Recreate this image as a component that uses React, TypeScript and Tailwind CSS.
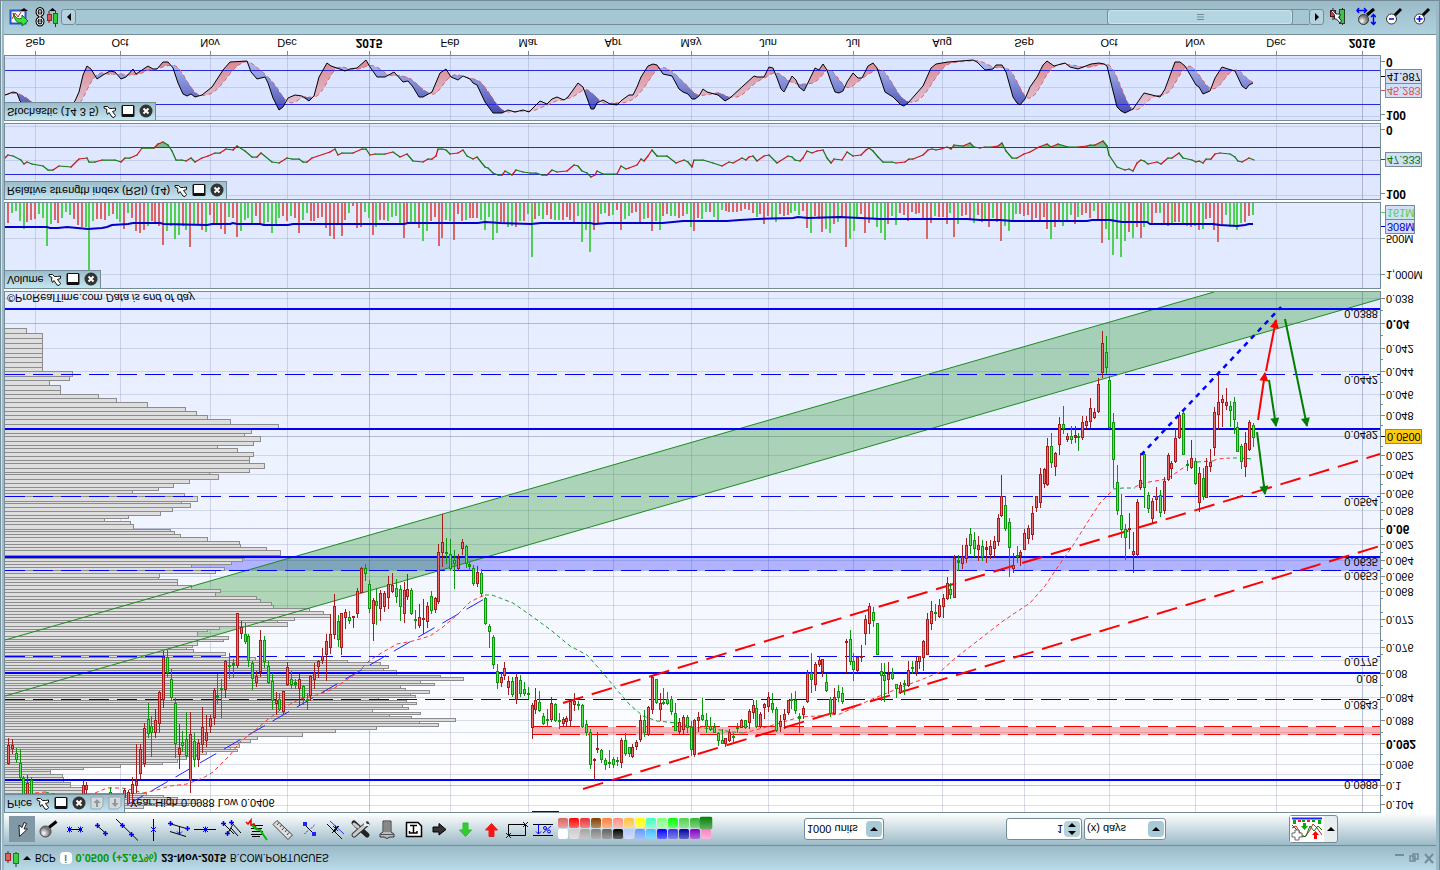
import { useState } from "react";
import type { ReactNode } from "react";

type Point = [number, number];

const FONT = '"Liberation Sans", Arial, sans-serif';

const toPoints = (s: string): Point[] =>
  s
    .trim()
    .split(/\s+/)
    .map((p) => p.split(",").map(Number) as Point);

const months: [number, string, boolean?][] = [
  [35, "Sep"],
  [120, "Oct"],
  [210, "Nov"],
  [287, "Dec"],
  [369, "2015", true],
  [450, "Feb"],
  [528, "Mar"],
  [613, "Apr"],
  [691, "May"],
  [768, "Jun"],
  [853, "Jul"],
  [942, "Aug"],
  [1024, "Sep"],
  [1109, "Oct"],
  [1195, "Nov"],
  [1276, "Dec"],
  [1362, "2016", true],
];

// x, high, body start, body end, low, direction
const candles = `
8,738,745,763,764,r 12,739,745,748,753,r 16,748,753,759,762,g 20,749,763,777,778,g 23,776,778,800,802,g 27,775,783,797,800,r 31,777,780,797,800,g
83,781,785,797,800,r 86,782,785,789,797,r 110,787,792,797,800,g 124,788,790,797,800,r 128,790,792,803,803,r 132,777,784,793,803,r 136,744,781,785,792,r
140,744,749,773,778,r 144,723,728,763,766,r 148,703,719,733,737,g 151,716,726,732,756,g 155,709,720,732,737,r 159,691,692,723,732,r 163,651,657,699,707,r
167,650,657,672,676,g 171,669,679,697,700,g 175,698,703,743,757,g 179,724,748,754,768,r 182,731,742,745,751,g 186,712,739,755,757,g 190,712,734,780,792,r
194,733,741,759,766,g 198,739,743,759,766,r 202,707,727,744,752,r 206,715,732,740,746,r 210,715,718,726,732,r 214,688,690,717,724,r 217,674,695,697,703,g
221,679,688,689,717,g 225,660,661,689,697,r 229,653,665,666,678,g 233,659,663,665,677,g 237,613,613,665,667,r 241,621,627,633,638,r 245,623,634,641,643,g
248,634,636,660,666,g 252,661,663,678,689,g 256,671,676,682,686,r 260,630,640,671,676,r 264,636,640,661,667,g 268,661,666,682,683,g 272,673,681,700,709,g
276,692,700,703,714,r 279,693,699,709,710,g 283,691,691,711,713,r 287,662,667,684,685,r 291,671,679,684,688,g 295,679,682,684,688,g 299,674,679,688,704,r
303,685,686,697,704,g 307,693,699,700,709,g 310,675,676,695,700,r 314,663,673,679,688,r 318,660,661,666,677,r 322,648,656,660,663,r 326,634,641,654,680,r
330,614,634,647,653,r 334,594,606,634,638,r 338,615,621,639,646,g 341,613,613,647,654,r 345,609,612,617,628,r 349,611,617,620,623,g 353,616,616,617,627,r
357,588,591,613,617,r 361,567,568,592,592,r 365,564,568,573,580,g 369,580,584,608,612,g 373,598,600,623,640,r 376,588,601,605,624,g 380,590,593,608,620,r
384,591,593,606,611,r 388,576,584,597,608,r 392,573,585,591,592,r 396,579,588,596,602,g 400,585,589,606,620,g 404,582,590,613,622,r 407,574,589,596,599,r
411,588,590,613,614,g 415,610,619,620,628,g 419,604,617,625,627,r 423,599,618,619,633,r 427,602,606,621,627,r 431,591,596,610,613,g 435,597,598,609,612,r
438,544,552,601,603,r 442,514,542,552,566,r 446,538,552,553,563,g 450,539,554,568,570,g 454,550,560,563,588,g 458,554,558,568,569,r 462,539,542,548,554,r
466,545,546,563,567,g 469,562,564,566,570,g 473,565,568,583,585,g 477,566,572,583,586,r 481,569,573,593,596,g 485,597,598,623,624,g 489,624,626,631,647,g
493,635,637,664,668,g 497,664,671,682,688,g 501,673,677,682,686,r 504,662,668,675,679,r 508,676,681,687,694,r 512,677,681,694,696,g 516,673,677,699,703,r
520,675,680,693,696,g 524,682,689,693,695,g 528,687,693,694,698,g 532,703,705,727,738,r 535,688,700,709,713,r 539,691,702,710,711,g 543,713,716,723,724,g
547,709,719,720,726,g 551,697,703,719,721,r 555,703,704,720,721,g 559,713,720,721,728,g 563,717,719,723,726,r 566,716,718,721,726,r 570,700,701,720,726,r
574,693,701,704,710,r 578,701,704,705,709,g 582,704,705,726,727,g 586,720,724,732,735,g 590,729,732,764,768,g 594,758,759,760,779,r 597,732,748,749,752,r
601,749,750,759,762,g 605,758,760,764,769,g 609,750,762,763,767,g 613,757,759,764,767,g 617,757,760,761,765,g 621,738,740,762,767,r 625,733,740,753,755,g
629,747,747,753,756,g 632,744,747,756,757,r 636,740,742,746,749,r 640,715,720,739,741,r 644,710,720,732,736,g 648,706,707,734,735,r 652,675,677,709,713,r
656,679,679,702,703,g 660,693,703,709,720,r 663,688,702,703,704,g 667,692,699,703,704,g 671,696,699,711,714,g 675,703,713,730,730,g 679,718,722,731,734,r
683,715,717,729,734,r 687,715,717,727,732,g 691,721,727,749,755,g 694,719,720,754,756,r 698,712,717,720,731,r 702,698,715,719,720,g 706,713,720,726,732,g
710,717,726,729,730,g 714,723,727,732,732,g 718,732,733,740,745,g 722,729,740,743,743,g 725,738,738,743,746,r 729,729,732,740,741,r 733,733,736,737,742,g
737,723,727,728,732,g 741,719,720,727,727,r 745,720,720,727,728,g 749,709,711,722,728,r 753,700,705,712,718,r 756,700,708,726,727,g 760,712,714,726,727,r
764,703,704,707,718,r 768,692,697,706,711,r 772,693,703,709,712,g 776,707,709,730,731,g 780,715,721,726,731,r 784,709,714,719,728,r 788,700,700,712,714,r
791,693,699,700,708,g 795,691,700,710,713,g 799,713,716,718,732,g 803,706,708,714,718,r 807,670,673,701,702,r 811,653,673,679,692,g 815,662,664,684,690,r
819,656,660,664,666,r 822,659,659,671,676,r 826,674,682,690,691,g 830,697,699,713,716,g 834,688,697,713,714,r 838,685,691,697,701,g 842,687,693,701,703,g
846,639,641,642,672,r 850,630,639,661,664,g 853,653,661,669,680,g 857,656,657,670,672,r 861,645,656,657,661,r 865,615,619,633,644,r 869,603,606,623,633,r
873,607,612,620,626,g 877,623,623,654,654,g 881,663,671,675,700,g 884,663,675,680,701,g 888,662,674,679,693,r 892,668,673,678,679,g 896,684,684,688,697,g
900,682,685,692,693,r 904,680,683,684,694,g 908,661,670,685,686,r 912,661,667,668,673,g 916,657,661,672,675,r 919,656,656,661,668,r 923,640,641,657,670,r
927,613,619,654,654,r 931,601,611,623,629,r 935,604,612,613,620,g 939,599,605,616,617,r 943,594,598,606,617,r 947,577,583,598,599,r 950,583,589,594,598,g
954,555,558,597,597,r 958,555,560,562,570,g 962,545,557,563,568,r 966,538,545,558,562,r 970,528,534,545,553,g 974,532,540,548,556,g 978,536,545,549,560,r
982,540,546,556,560,g 986,541,547,549,562,r 990,540,546,554,558,r 994,536,541,548,556,r 998,514,518,541,545,r
1001,475,496,515,516,r 1005,496,505,528,530,g 1009,518,522,547,576,g 1013,553,565,568,572,r 1017,546,555,556,562,g 1020,550,552,555,565,r
1024,529,533,549,549,r 1028,525,528,538,543,r 1032,506,513,534,539,r 1036,496,496,507,511,r 1040,468,474,502,507,r 1044,468,469,483,487,r 1047,438,446,484,485,r
1051,433,446,462,467,g 1055,452,453,466,475,r 1059,417,424,444,454,r 1063,406,424,428,433,g 1067,433,436,439,441,r 1071,426,436,439,443,g 1075,426,435,437,442,r
1078,433,436,437,450,g 1082,416,422,437,439,r 1086,416,421,425,428,r 1090,398,408,421,427,r 1094,408,412,417,418,r 1098,378,384,411,412,r 1102,331,343,372,377,r
1106,336,352,367,373,g 1109,376,380,427,428,g 1113,413,422,459,487,g 1117,465,482,510,514,g 1121,494,515,529,537,g 1125,524,529,537,559,g 1129,513,528,529,548,r
1133,532,551,554,572,r 1137,499,502,554,556,r 1140,453,480,487,489,r 1144,452,454,487,507,g 1148,492,495,508,512,g 1152,498,501,518,522,r 1156,487,496,499,510,r
1160,490,495,512,516,g 1164,477,481,510,513,r 1168,453,455,479,480,r 1171,461,463,468,478,r 1175,429,438,461,462,r 1179,412,415,437,438,r 1183,409,413,454,454,g
1187,460,464,465,470,g 1191,440,458,467,468,r 1195,458,461,483,484,g 1199,467,473,502,511,r 1203,468,478,496,499,g 1206,458,466,497,497,r 1210,449,462,466,471,r
1214,407,412,447,455,r 1218,374,402,414,429,r 1222,395,399,402,426,r 1226,388,402,405,409,r 1230,401,406,410,426,g 1234,397,402,419,433,g 1237,422,427,451,451,g
1241,444,446,461,468,g 1245,432,443,466,476,r 1249,420,422,449,450,r 1253,423,425,437,446,g`
  .trim()
  .split(/\s+/)
  .map((row) => {
    const [x, high, open, close, low, dir] = row.split(",");
    return { x: +x, high: +high, open: +open, close: +close, low: +low, up: dir === "r" };
  });

const volumes = `
20r 10g 8g 18g 26g 19r 17r 16r 11g 15g 43g 21g 17r 20r 15g 9g 12g 16r 22r 24r 24g 67g 18g 16r 16r 17r 13g 11r 16g 19g 26r 10g 15r 28r 30r 27r 23g 18r 21r 23r
42r 28g 23g 36g 32g 23r 27g 44r 22g 21r 27r 29g 12r 21r 21g 26r 31r 14g 15r 34r 28g 17g 15g 22g 13r 21r 23g 19g 30g 22g 15g 13r 18r 13g 15r 30r 17g 10g 18r 18r
15r 14r 25r 33r 36r 21r 33r 17r 10g 3r 25r 24r 9g 15g 32r 24g 17r 17r 18g 14g 13g 21g 35r 20r 21g 21g 25r 38g 28g 18r 14r 43r 35r 17g 18g 37r 11r 18r 17g 15r 15r 15r
17g 27g 14g 37g 30g 20r 21r 24g 23g 24r 18g 18r 11g 54g 16r 13g 16g 12r 16r 17g 17g 17r 14r 17r 19r 13g 39g 27g 49g 27r 21r 11g 10g 13r 12g 7r 27r 16g 13g 10r
9r 20r 16g 15r 28r 18g 27g 13r 11r 13g 13g 15r 13r 11g 24g 28r 15r 16g 9g 9r 14g 18g 7g 8r 9r 9r 9r 8r 6r 7r 10r 14g 11r 21r 13r 15g 19g 11r 13r 12r
10g 8g 12g 8r 25r 30g 13r 16r 29r 26g 30g 21r 19g 15r 44r 36g 28g 16g 11r 30r 20r 15g 24g 30g 37g 21r 13g 22g 10r 12r 18r 9r 11r 10r 16r 36r 20r 13g 14r 14r
21r 10g 34r 21g 13r 12r 16r 20g 12r 19r 16g 24r 15g 19r 38r 23g 28g 19g 11g 11r 13r 12r 18r 15r 18r 14r 26r 36g 24r 18r 23g 18g 12g 21r 14g 12r 10r 15r 8g 18r
40r 26g 37g 52g 36g 54g 38g 29r 35g 24r 35r 24g 19g 20r 10r 10g 20r 23r 22g 19r 19r 22g 23g 24r 23g 27r 26g 16r 15r 27r 39r 23r 12g 24g 23g 27g 20g 19r 13r 12g`
  .trim()
  .split(/\s+/)
  .map((v) => ({ size: parseInt(v, 10), up: v.endsWith("r") }));

const volumeAverage = `5,227 47,227 50,228 58,228 67,227 88,229 102,228 107,227 112,225 128,224 133,223 160,223 164,224 207,225 212,224 230,224 233,223 237,224
260,224 264,225 288,225 293,224 404,224 408,223 478,223 485,222 500,223 531,224 541,223 590,223 595,224 607,223 663,223 683,221 727,221 740,220 757,219 793,218
798,217 808,218 840,217 880,219 967,219 980,220 1000,220 1012,221 1087,221 1092,220 1110,220 1122,222 1147,222 1150,224 1213,224 1220,225 1237,226 1245,225 1249,224 1253,224`;

const rsi = toPoints(`5,158 8,155 13,156 21,160 24,164 27,162 32,164 43,166 48,170 53,170 59,166 71,167 79,159 87,158 89,162 95,162 102,160 115,160 121,162 125,158
130,158 137,155 142,148 154,148 158,144 163,142 168,145 172,151 176,160 182,160 186,161 191,158 195,162 202,158 208,156 215,153 220,153 226,149 233,150 237,146 245,151
252,157 257,157 261,153 272,162 279,163 287,158 292,159 299,159 303,162 307,162 312,158 330,152 335,149 338,155 342,153 353,153 362,149 366,149 370,155 375,154 385,154
393,152 400,157 407,154 413,161 423,162 428,159 432,159 436,156 438,149 442,149 446,150 450,154 458,153 463,150 467,156 473,159 477,157 485,167 488,168 493,173 498,175
502,175 505,171 512,175 516,170 523,172 530,173 536,173 542,175 547,175 552,170 557,172 567,171 574,165 578,166 582,171 587,173 591,177 595,175 597,171 603,174 617,174
621,166 626,169 629,168 637,165 641,159 644,161 648,156 652,150 657,156 667,156 676,163 684,160 688,162 692,167 694,160 703,160 713,163 722,166 729,162 733,163 742,158
746,160 749,157 753,156 757,161 764,156 769,155 777,163 788,156 792,157 795,160 800,161 803,158 807,151 812,153 817,151 823,150 827,158 831,163 834,159 842,160 847,152
853,156 861,155 866,150 869,148 873,151 878,157 883,162 892,162 896,163 905,162 909,159 913,159 923,155 928,150 932,149 936,150 941,149 947,147 951,149 954,145 963,146
970,143 974,147 980,148 985,147 992,147 998,146 1002,143 1006,151 1012,158 1017,158 1024,154 1030,152 1039,147 1047,144 1051,147 1058,144 1068,147 1078,147 1087,146
1090,145 1095,145 1103,141 1107,146 1109,155 1117,167 1125,170 1129,169 1133,171 1137,163 1141,160 1144,161 1148,164 1157,162 1161,164 1168,158 1172,158 1179,153
1183,158 1192,160 1196,162 1199,161 1203,163 1206,159 1211,159 1215,154 1220,153 1230,154 1235,157 1238,161 1242,162 1249,158 1254,160`);

const stochastic = toPoints(`5,95 13,92 17,93 20,101 27,108 40,112 60,113 72,104 75,101 79,92 83,75 87,66 91,69 97,79 103,75 110,71 115,72 121,79 126,77 133,69 136,74
148,66 153,69 157,69 163,62 168,62 173,68 178,83 183,94 187,96 191,94 195,97 202,95 212,87 223,70 230,62 247,61 251,72 257,79 265,77 268,83 273,98 279,110 283,107
288,98 295,95 302,96 309,101 314,96 319,77 327,63 331,66 337,68 345,71 350,69 357,68 366,60 370,67 377,77 385,77 394,72 403,82 408,81 413,87 419,97 423,97 432,92
440,73 446,69 451,77 458,80 463,76 470,79 473,83 477,85 485,102 493,113 502,113 508,110 515,112 523,110 529,112 534,107 540,101 547,104 552,99 557,97 564,100 568,97
578,83 583,87 591,109 594,109 597,103 603,100 610,104 617,105 622,100 629,95 633,95 637,87 641,77 648,66 653,64 657,65 663,74 672,76 679,89 683,92 688,94 692,99
695,99 699,96 703,89 707,92 718,95 725,101 730,98 743,86 754,76 757,77 764,77 769,67 773,68 777,78 781,89 784,92 792,76 796,80 799,87 804,91 815,68 819,70 823,64
827,70 831,82 835,92 839,93 843,91 847,82 853,73 858,78 862,78 868,66 873,63 877,68 885,92 893,97 901,105 904,106 908,103 923,86 931,68 936,64 948,62 973,60 977,62
985,70 993,69 996,65 1002,65 1006,72 1013,97 1017,103 1020,105 1025,99 1030,87 1037,77 1043,65 1047,61 1054,66 1065,63 1070,67 1078,69 1091,64 1099,63 1104,64
1107,66 1112,87 1117,107 1121,111 1125,113 1133,109 1144,93 1160,97 1165,89 1172,70 1175,62 1180,62 1185,66 1196,85 1199,87 1203,94 1210,91 1215,78 1222,67 1228,69
1235,71 1242,86 1246,89 1249,85 1253,83`);

const valueAt = (points: Point[], x: number) => {
  const i = points.findIndex((p) => p[0] >= x);
  if (i <= 0) return points[i === 0 ? 0 : points.length - 1][1];
  const [x0, y0] = points[i - 1];
  const [x1, y1] = points[i];
  return y0 + ((y1 - y0) * (x - x0)) / (x1 - x0);
};

const stochK: Point[] = Array.from({ length: 625 }, (_, i) => [5 + i * 2, valueAt(stochastic, 5 + i * 2)]);
const stochD: Point[] = stochK.map(([x], i) => {
  const part = stochK.slice(Math.max(0, i - 9), i + 1);
  return [x, part.reduce((sum, p) => sum + p[1], 0) / part.length];
});

// y, right edge
const profile = toPoints(`328,26 333,42 338,42 343,42 348,42 353,42 357,42 362,42 367,42 371,72 376,69 380,49 385,60 390,60 394,98 398,116 402,147 407,185 411,196
415,207 419,230 424,278 429,251 433,244 436,260 441,253 445,217 448,237 452,253 456,249 460,249 463,264 468,249 472,209 474,218 479,189 483,173 487,158 490,132
493,184 496,197 501,181 503,190 507,172 511,160 515,128 518,104 521,130 524,133 529,170 531,174 534,180 537,207 541,239 544,240 547,266 550,280 555,244 558,242
561,231 564,191 567,224 570,215 573,159 577,158 579,177 582,177 585,191 589,220 592,215 596,256 599,260 602,271 605,273 608,309 611,323 614,330 617,294 620,277
622,287 626,219 629,207 631,197 636,228 639,223 641,197 645,192 647,186 649,193 652,225 655,220 657,255 660,347 662,380 665,388 668,383 670,396 675,440 677,463
680,420 683,434 685,400 688,405 690,429 693,410 695,415 697,378 700,406 702,416 704,402 707,408 709,372 712,420 714,389 716,411 718,455 721,419 723,438 726,376
729,335 732,302 736,257 739,250 742,238 744,239 747,230 749,237 751,206 754,196 756,186 759,177 762,162 764,120 767,83 769,50 771,50 774,62 777,63 779,63 782,70
784,70 787,83 790,83 793,146 795,163 797,177 799,197 803,188 805,143 808,120`);

const priceGrid = [
  298, 348, 371, 394, 415, 455, 474, 493, 510, 544, 560, 576, 591, 605, 619, 633, 647, 660, 673, 685, 697, 709, 720, 732,
  743, 754, 764, 774, 795, 805,
];
const priceGridMajor = [323, 436, 528, 785];

const priceScale: [number, string, boolean?][] = [
  [298, "0.038"],
  [323, "0.04", true],
  [348, "0.042"],
  [371, "0.044"],
  [394, "0.046"],
  [415, "0.048"],
  [455, "0.052"],
  [474, "0.054"],
  [493, "0.056"],
  [510, "0.058"],
  [528, "0.06", true],
  [544, "0.062"],
  [560, "0.064"],
  [576, "0.066"],
  [591, "0.068"],
  [619, "0.072"],
  [647, "0.076"],
  [673, "0.08"],
  [697, "0.084"],
  [720, "0.088"],
  [743, "0.092", true],
  [764, "0.096"],
  [785, "0.1"],
  [804, "0.104"],
];

const levels: [number, string][] = [
  [314, "0.0388"],
  [380, "0.0442"],
  [435, "0.0492"],
  [502, "0.0564"],
  [562, "0.0635"],
  [576, "0.0653"],
  [662, "0.0775"],
  [679, "0.08"],
  [705, "0.0843"],
  [785, "0.0989"],
];

const averages: [string, string][] = [
  ["#f33", "35,793 45,792"],
  ["#1a9a3a", "45,792 55,794"],
  ["#f33", "95,793 107,788 122,788"],
  ["#1a9a3a", "122,788 133,790 143,793"],
  [
    "#f33",
    "143,793 157,790 170,786 187,784 203,778 213,772 230,755 240,742 253,732 267,720 283,708 300,699 317,695 333,689 357,673 370,660 383,652 397,644 413,641 430,636 443,627 457,615 470,602 480,597 485,595",
  ],
  [
    "#1a9a3a",
    "485,595 492,595 500,598 513,603 533,617 552,631 570,646 587,655 603,673 617,690 630,705 643,716 657,721 677,723 693,727 713,729 733,732 743,733",
  ],
  [
    "#f33",
    "743,733 763,728 773,725 790,720 800,717 817,716 840,714 853,708 870,700 887,693 907,685 923,679 940,672 953,660 967,649 980,639 1003,621 1030,603 1045,586 1057,568 1072,547 1087,523 1100,503 1113,490",
  ],
  ["#1a9a3a", "1113,489 1123,488 1135,488"],
  ["#f33", "1135,487 1143,483 1167,479 1180,470 1190,463"],
  ["#1a9a3a", "1197,462 1213,461"],
  ["#f33", "1213,461 1217,459 1230,458"],
  ["#1a9a3a", "1233,458 1240,458 1253,459"],
];

function Label({
  x,
  y,
  bold,
  color = "#000",
  anchor = "start",
  children,
}: {
  x: number;
  y: number;
  bold?: boolean;
  color?: string;
  anchor?: "start" | "middle" | "end";
  children: ReactNode;
}) {
  return (
    <text
      transform={`translate(${x} ${y - 4}) scale(1 -1)`}
      textAnchor={anchor}
      fill={color}
      className={bold ? "text-[12px] font-bold" : "text-[11px]"}
    >
      {children}
    </text>
  );
}

function Grid({ top, bottom, rows, major = [] }: { top: number; bottom: number; rows: number[]; major?: number[] }) {
  return (
    <g shapeRendering="crispEdges">
      {rows.map((y) => (
        <rect key={y} x={5} y={y} width={1375} height={1} fill="#7882a8" opacity={0.25} />
      ))}
      {major.map((y) => (
        <rect key={y} x={5} y={y} width={1375} height={1} fill="#7882a8" opacity={0.5} />
      ))}
      {months.map(([x, , bold]) => (
        <rect key={x} x={x} y={top} width={1} height={bottom - top} fill="#7882a8" opacity={bold ? 0.5 : 0.28} />
      ))}
    </g>
  );
}

// The plots use a y axis that grows in the opposite direction to the page, so they are mirrored once more
function Plot({ top, height, className, children }: { top: number; height: number; className: string; children: ReactNode }) {
  return (
    <div className={`min-w-0 flex-1 border border-[#738c98] ${className}`}>
      <svg
        viewBox={`5 ${top} 1375 ${height}`}
        preserveAspectRatio="none"
        className="block w-full -scale-y-100"
        style={{ height }}
      >
        {children}
      </svg>
    </div>
  );
}

function Scale({
  top,
  height,
  ticks,
  children,
}: {
  top: number;
  height: number;
  ticks: [number, string, boolean?][];
  children?: ReactNode;
}) {
  return (
    <svg viewBox={`1381 ${top} 55 ${height}`} className="w-[55px] shrink-0 -scale-y-100" style={{ height }}>
      {ticks.map(([y, label, bold]) => (
        <g key={label}>
          <rect x={1381} y={y} width={4} height={1} fill="#738c98" />
          <Label x={1386} y={y + 1} bold={bold}>
            {label}
          </Label>
        </g>
      ))}
      {children}
    </svg>
  );
}

function ValueBox({ y, color, fill, children }: { y: number; color: string; fill: string; children: string }) {
  return (
    <g>
      <rect x={1381} y={y + 7} width={4} height={1} fill={color} />
      <rect
        x={1385.5}
        y={y + 0.5}
        width={children.length < 5 ? 29 : 36}
        height={14}
        fill={fill}
        stroke="#738c98"
      />
      <Label x={1387} y={y + 8} color={color}>
        {children}
      </Label>
    </g>
  );
}

function WrenchIcon() {
  return (
    <svg viewBox="0 0 14 14" className="size-[14px] -scale-y-100">
      <path
        d="M1 2.500 4.500 2.500 6.500 4.500 9.500 4.500 12.500 4 12.500 6.500 9.500 7.500 12.500 11.500 11 13.500 9 13 6 8.500 4.500 10.500 3.500 8 4 5.500 1 4Z"
        fill="#fff"
        stroke="#111"
      />
    </svg>
  );
}

function PanelHeader({ title, arrows }: { title: string; arrows?: boolean }) {
  return (
    <div className="absolute left-0 top-0 z-10 flex h-[19px] items-center gap-1 border border-[#738c98] bg-linear-to-b from-[#c4e6f1] to-[#9bbcc9] px-[2px]">
      <span className="whitespace-nowrap">{title}</span>
      <button aria-label={`${title} settings`}>
        <WrenchIcon />
      </button>
      <button aria-label={`Maximize ${title}`}>
        <svg viewBox="0 0 14 14" className="size-[14px]">
          <rect x="0.500" y="1" width="13" height="12" rx="1.500" fill="#111" />
          <rect x="2" y="4" width="10" height="8" fill="#fff" />
        </svg>
      </button>
      <button aria-label={`Close ${title}`}>
        <svg viewBox="0 0 14 14" className="size-[14px]">
          <circle cx="7" cy="7" r="6.500" fill="#333" />
          <path d="M4.500 4.500 9.500 9.500M9.500 4.500 4.500 9.500" stroke="#fff" strokeWidth="2" />
        </svg>
      </button>
      {arrows &&
        [true, false].map((down) => (
          <button key={String(down)} aria-label={down ? "Move down" : "Move up"}>
            <svg viewBox="0 0 14 14" className="size-[14px]">
              <path d="M1 1H10L13 4V13H1Z" fill="#d2dade" stroke="#9aa8ae" />
              <path
                d={down ? "M6 3H8V7H10.500L7 11 3.500 7H6Z" : "M6 11H8V7H10.500L7 3 3.500 7H6Z"}
                fill="#8c989d"
              />
            </svg>
          </button>
        ))}
    </div>
  );
}

function Cross({ x, y }: { x: number; y: number }) {
  return <path d={`M${x - 2.5} ${y - 2.5}l5 5m0 -5l-5 5M${x} ${y - 3}v6`} stroke="#00f" />;
}

function Plus({ x, y }: { x: number; y: number }) {
  return <path d={`M${x - 2.5} ${y}h5M${x} ${y - 2.5}v5`} stroke="#00f" strokeWidth={1.5} />;
}

const tools: { name: string; icon: ReactNode }[] = [
  {
    name: "Pointer",
    icon: <path d="M10.500 20.500 18.500 13 15 13 17.500 7.500 15 6.500 13 11.500 10 9Z" fill="#fff" stroke="#222" />,
  },
  {
    name: "Zoom",
    icon: (
      <>
        <path d="M14 11.500 21.500 5.500" stroke="#000" strokeWidth="3" />
        <circle cx="10.500" cy="15.500" r="5.500" fill="url(#lens)" stroke="#444" />
      </>
    ),
  },
  {
    name: "Horizontal segment",
    icon: (
      <>
        <path d="M7 13.500H21" stroke="#000" />
        <Cross x={8.5} y={13.5} />
        <Cross x={19.5} y={13.5} />
      </>
    ),
  },
  {
    name: "Segment",
    icon: (
      <>
        <path d="M10 9.500 19 17.500" stroke="#000" />
        <Plus x={10.5} y={9.5} />
        <Plus x={18.5} y={17.5} />
      </>
    ),
  },
  {
    name: "Line",
    icon: (
      <>
        <path d="M3 3 25 24.500" stroke="#000" />
        <Plus x={9.5} y={9.5} />
        <Plus x={18.5} y={18.5} />
      </>
    ),
  },
  {
    name: "Vertical line",
    icon: (
      <>
        <path d="M14.500 3V25" stroke="#000" />
        <Cross x={14.5} y={13.5} />
      </>
    ),
  },
  {
    name: "Channel",
    icon: (
      <>
        <path d="M6 8 23 13M5 15.500 21 20.500" stroke="#000" />
        <Plus x={5.5} y={7.5} />
        <Plus x={22.5} y={12.5} />
        <path d="M14.500 11V18M12 15.500 14.500 18 17 15.500" stroke="#00f" fill="none" />
      </>
    ),
  },
  {
    name: "Horizontal line",
    icon: (
      <>
        <path d="M3 13.500H25" stroke="#000" />
        <Cross x={14.5} y={13.5} />
      </>
    ),
  },
  {
    name: "Pitchfork",
    icon: (
      <>
        <path d="M6.500 7.500 17 18M14.500 6.500 24 17M11 17 15.500 9M14 12 21 20" stroke="#000" />
        <Plus x={6.5} y={7.5} />
        <Plus x={14.5} y={6.5} />
        <Plus x={10.5} y={17.5} />
      </>
    ),
  },
  {
    name: "Analysis",
    icon: (
      <>
        <path d="M8 9.500H20M8 12.500H19M9 15.500H20M8 18.500H20M9 20.500H17" stroke="#000" />
        <path d="M3 6 5 8 8 4 8 9 11 8 14 14" stroke="#e00" fill="none" strokeWidth="1.500" />
        <path d="M9 9 13 13 17 14 24 24" stroke="#0b0" fill="none" strokeWidth="2" />
      </>
    ),
  },
  {
    name: "Ruler",
    icon: (
      <>
        <path d="M4 8.500 8 4.500 23.500 19 19 23.500Z" fill="#ddd" stroke="#444" />
        <path d="M10 6.500 8 9M12.500 9 11 11M15 11.500 13 14M17.500 14 16 16M20 16.500 18 19" stroke="#444" />
      </>
    ),
  },
  {
    name: "Extend",
    icon: (
      <>
        <path d="M10 9 19 18" stroke="#000" />
        <path d="M8 6H12V10H8ZM17 16H21V20H17Z" fill="#22f" />
        <path d="M19.500 9 15.500 13M9.500 18 13.500 14" stroke="#22f" strokeDasharray="2 1" />
      </>
    ),
  },
  {
    name: "Parallel",
    icon: (
      <>
        <path d="M6 8 21 23" stroke="#000" />
        <path d="M9 5 23 18" stroke="#23f" />
        <path d="M11 17 18 10" stroke="#000" />
        <Cross x={14.5} y={12.5} />
      </>
    ),
  },
  {
    name: "Settings",
    icon: (
      <>
        <path d="M7 7 20 19" stroke="#222" strokeWidth="5" strokeLinecap="round" />
        <path d="M7 19 20 8" stroke="#333" strokeWidth="5" strokeLinecap="round" />
        <path d="M7 19 19 8.500M7 8 11 11" stroke="#ccc" strokeWidth="3" strokeLinecap="round" />
        <path d="M18 5 18 9 22 9" stroke="#eee" strokeWidth="2" fill="none" />
      </>
    ),
  },
  {
    name: "Clear",
    icon: (
      <>
        <path d="M10 5H18V16L21 18V21H17L14 22.500 11 21H7V18L10 16Z" fill="#bbb" stroke="#333" />
        <path d="M12 6V16M14 6V16M16 6V16M8 18.500H20" stroke="#555" />
      </>
    ),
  },
  {
    name: "Text",
    icon: (
      <>
        <path d="M7.500 6.500H19L22.500 10V20.500H7.500Z" fill="#fff" stroke="#000" strokeWidth="1.500" />
        <path d="M11 9.500H18M14.500 9.500V16.500M10.500 15V17H18V15" stroke="#000" strokeWidth="1.500" fill="none" />
      </>
    ),
  },
  { name: "Right arrow", icon: <path d="M8 11H14V7.500L21 13.500 14 19V16H8Z" fill="#333" stroke="#000" /> },
  { name: "Up arrow", icon: <path d="M12 7H17V14H20.500L14.500 20.500 8.500 14H12Z" fill="#3c3" stroke="#3b3" /> },
  { name: "Down arrow", icon: <path d="M12 20.500H17V14H20.500L14.500 7.500 8.500 14H12Z" fill="#f11" stroke="#d22" /> },
  {
    name: "Rectangle",
    icon: (
      <>
        <path d="M5.500 8.500H22.500V19.500H5.500Z" fill="none" stroke="#000" />
        <path d="M20 6l5 5m0-5l-5 5M3 17l5 5m0-5l-5 5" stroke="#00f" />
      </>
    ),
  },
  {
    name: "Retracement",
    icon: (
      <>
        <path d="M4 8.500H24M4 19.500H24" stroke="#000" />
        <path d="M9.500 8V18M7 15.500 9.500 18 12 15.500" stroke="#00f" fill="none" />
        <path d="M14 17 22 10" stroke="#00f" />
        <circle cx="16" cy="12" r="1.500" stroke="#00f" fill="none" />
        <circle cx="20" cy="15.500" r="1.500" stroke="#00f" fill="none" />
      </>
    ),
  },
];

const palette = [
  ["#ffffff", "#cccccc", "#a3a3a3", "#808080", "#606060", "#000000", "#b4c8ff", "#6496ff", "#40c0ff", "#0000ff", "#3232dc", "#0000a0", "#8000c0", "#ff80c0"],
  ["#dc6464", "#ff0000", "#e63232", "#804000", "#ff8040", "#ff9080", "#ffc040", "#ffff00", "#40ffc0", "#80ff80", "#00ff00", "#50d050", "#32b432", "#008000"],
];

function Candles({ className }: { className: string }) {
  return (
    <svg viewBox="0 0 16 18" className={className}>
      <path d="M4 4V16M12 0V15" stroke="#333" />
      <rect x="1.500" y="6.500" width="5" height="7" fill="#e06060" stroke="#a22" />
      <rect x="9.500" y="3.500" width="5" height="10" fill="#4c4" stroke="#181" />
    </svg>
  );
}

function DownArrow({ className = "" }: { className?: string }) {
  return (
    <svg viewBox="0 0 8 4" className={`h-1 w-2 ${className}`}>
      <path d="M0 0H8L4 4Z" />
    </svg>
  );
}

function TitleBar() {
  return (
    <header className="flex h-[25px] items-center border-b border-[#738c98] bg-linear-to-t from-[#9bbac7] to-[#b9dae8] pr-px">
      <Candles className="h-[18px] w-4" />
      <DownArrow className="ml-[3px]" />
      <span className="ml-1 text-[10px]">BCP</span>
      <button aria-label="Information" className="ml-1 h-3 w-3 rounded-sm bg-white text-[10px] leading-3 font-bold text-gray-500">
        i
      </button>
      <span className="ml-1 font-bold text-[#009600]">0.0500 (+2.67%)</span>
      <span className="ml-1 font-bold">23-Nov-2015</span>
      <span className="ml-1 flex-1 text-[10px]">B.COM.PORTUGUES</span>
      <div className="flex gap-[3px] text-[#738c98]">
        <button aria-label="Minimize">
          <svg viewBox="0 0 12 12" className="size-3">
            <path d="M2 9H11" stroke="currentColor" strokeWidth="2" />
          </svg>
        </button>
        <button aria-label="Restore">
          <svg viewBox="0 0 12 12" className="size-3" fill="none" stroke="currentColor" strokeWidth="1.500">
            <path d="M2 3H7V8H2ZM5 5H10V10H5Z" />
          </svg>
        </button>
        <button aria-label="Close">
          <svg viewBox="0 0 12 12" className="size-3">
            <path d="M2 1 10 10M10 1 2 10" stroke="currentColor" strokeWidth="2" />
          </svg>
        </button>
      </div>
    </header>
  );
}

function Dropdown({ label, value, className }: { label: string; value: string; className: string }) {
  return (
    <div className={`relative h-[22px] ${className}`}>
      <select
        aria-label={label}
        className="h-full w-full appearance-none rounded-[3px] border border-[#738c98] bg-white pl-[2px] leading-5"
      >
        <option>{value}</option>
      </select>
      <span className="pointer-events-none absolute top-[3px] right-[2px] flex h-4 w-4 items-center justify-center rounded-sm bg-[#a8cad8]">
        <DownArrow />
      </span>
    </div>
  );
}

function Toolbar() {
  const [tool, setTool] = useState("Pointer");
  const [color, setColor] = useState("#008000");
  return (
    <div className="flex h-8 items-center bg-linear-to-t from-white to-[#9bbac7] pr-[98px] pl-[5px]">
      {tools.map(({ name, icon }) => (
        <button
          key={name}
          aria-label={name}
          onClick={() => setTool(name)}
          className={name === tool ? "bg-[#8199a6]" : ""}
        >
          <svg viewBox="0 0 26 26" className="size-[26px] -scale-y-100" fill="none">
            {icon}
          </svg>
        </button>
      ))}
      <div className="ml-[3px] flex flex-col gap-px">
        {palette.map((row, i) => (
          <div key={i} className="flex gap-px">
            {row.map((c) => (
              <button
                key={c}
                aria-label={c}
                onClick={() => setColor(c)}
                className={`size-[10px] rounded-xs bg-linear-to-b from-white/40 to-white/0 ${c === color ? "scale-130" : ""}`}
                style={{ backgroundColor: c }}
              />
            ))}
          </div>
        ))}
      </div>
      <Dropdown label="Units" value="1000 units" className="ml-[93px] w-[80px]" />
      <div className="ml-auto flex gap-0.5">
        <div className="relative h-[22px] w-[76px]">
          <input
            aria-label="Period"
            defaultValue="1"
            className="h-full w-full rounded-[3px] border border-[#738c98] bg-white pr-[18px] text-right"
          />
          <span className="pointer-events-none absolute top-[3px] right-[2px] flex h-4 w-4 flex-col items-center justify-center gap-1 rounded-sm bg-[#b4d3df]">
            <DownArrow className="-scale-y-100" />
            <DownArrow />
          </span>
        </div>
        <Dropdown label="Period unit" value="(x) days" className="w-[82px]" />
      </div>
      <button
        aria-label="Add indicator"
        className="ml-[123px] flex h-7 w-[49px] items-center rounded-[3px] border border-[#738c98] bg-[#e8eef0]"
      >
        <svg viewBox="0 0 34 26" className="h-[26px] w-[34px] -scale-y-100" fill="none">
          <rect width="34" height="26" fill="#fff" />
          <path d="M2 2.500H32" stroke="#22f" strokeWidth="2" />
          <path d="M3 4H6V8H3ZM12 4H15V6H12ZM22 4H25V6H22ZM28 4H31V8H28Z" fill="#0a0" />
          <path d="M8 4H11V6H8ZM17 4H20V6H17Z" fill="#e22" />
          <path d="M2 12 6 10 11 18 15 21 20 14 23 8 27 12 32 19" stroke="#c22" />
          <path d="M2 9 7 14 12 21 16 20 20 10 24 15 28 10 32 14" stroke="#171" />
          <path d="M13 7H16V10H18L14.500 14 11 10H13Z" fill="#0a0" />
          <path d="M24 23H27V19H29L25.500 15 22 19H24Z" fill="#f00" />
          <path d="M5 14H9V17H12V21H9V24H5V21H2V17H5Z" fill="#fff" stroke="#666" />
        </svg>
        <DownArrow className="mx-auto" />
      </button>
    </div>
  );
}

function HLine({ y, dashed, color = "#00f", x = 5 }: { y: number; dashed?: boolean; color?: string; x?: number }) {
  return (
    <path
      d={`M${x} ${dashed ? y + 0.5 : y}H1380`}
      stroke={color}
      strokeWidth={dashed ? 1 : 2}
      strokeDasharray={dashed ? "20 8" : undefined}
      shapeRendering="crispEdges"
    />
  );
}

function Arrow({ from, to, color }: { from: Point; to: Point; color: string }) {
  const angle = (Math.atan2(to[1] - from[1], to[0] - from[0]) * 180) / Math.PI;
  return (
    <g>
      <path d={`M${from}L${to}`} stroke={color} strokeWidth={2} />
      <path d="M1 0 -8 4.500 -8 -4.500Z" fill={color} transform={`translate(${to}) rotate(${angle})`} />
    </g>
  );
}

function PriceChart() {
  return (
    <section className="relative flex">
      <PanelHeader title="Price" arrows />
      <Plot top={292} height={520} className="bg-linear-to-t from-[#e5ecff] to-white">
        <Grid top={292} bottom={812} rows={priceGrid} major={priceGridMajor} />
        <rect x={5} y={557} width={1375} height={14} fill="#00f" opacity={0.27} />
        <path d="M5 640 1214 292H1380V299L5 696Z" fill="#008000" opacity={0.28} />
        <rect x={532} y={727} width={848} height={8} fill="#f00" opacity={0.28} />
        <g shapeRendering="crispEdges">
          {profile.map(([y, right], i) => {
            const end = i + 1 < profile.length ? profile[i + 1][0] : y + 3;
            return (
              <g key={y}>
                <rect x={5} y={y} width={right - 4} height={end - y + 1} fill="#8c8c8c" />
                <rect x={5} y={y + 1} width={right - 5} height={end - y - 1} fill="#dedede" />
              </g>
            );
          })}
        </g>
        <g fill="none">
          <path d="M5 640 1214 292M5 696 1380 299" stroke="#1c8c1c" />
          {[309, 429, 557, 673, 780].map((y) => (
            <HLine key={y} y={y} />
          ))}
          {[374, 496, 570, 656].map((y) => (
            <HLine key={y} y={y} dashed />
          ))}
          <HLine y={699} dashed color="#00a" />
          <HLine y={726} x={532} dashed color="#f00" />
          <HLine y={734} x={532} dashed color="#f00" />
          <path d="M532 811.500H559" stroke="#00c" />
          <path d="M563 703 1380 454M583 789 1380 546" stroke="#f00" strokeWidth={2} strokeDasharray="21 9" />
          <path d="M127 805 486 598" stroke="#22f" strokeDasharray="19 9" />
          {averages.map(([color, points]) => (
            <polyline key={points} points={points} stroke={color} strokeDasharray="4 3" />
          ))}
        </g>
        <g shapeRendering="crispEdges">
          {candles.map((c) => (
            <g key={c.x} fill={c.up ? "#a51c1c" : "#0c960c"}>
              <rect x={c.x} y={c.high} width={1} height={c.low - c.high + 1} />
              <rect x={c.x - 1} y={c.open} width={3} height={c.close - c.open + 1} />
              {c.close - c.open > 2 && (
                <rect
                  x={c.x}
                  y={c.open + 1}
                  width={1}
                  height={c.close - c.open - 1}
                  fill={c.up ? "#e87070" : "#60e060"}
                />
              )}
            </g>
          ))}
        </g>
        <path d="M1141 455 1281 307" stroke="#00f" strokeWidth={2.5} strokeDasharray="5 5" />
        <Arrow from={[1258, 420]} to={[1265, 373]} color="#f00" />
        <Arrow from={[1266, 371]} to={[1276, 320]} color="#f00" />
        <Arrow from={[1257, 432]} to={[1265, 494]} color="#008000" />
        <Arrow from={[1269, 380]} to={[1276, 426]} color="#008000" />
        <Arrow from={[1285, 319]} to={[1307, 426]} color="#008000" />
        {levels.map(([y, label]) => (
          <Label key={label} x={1378} y={y} anchor="end">
            {label}
          </Label>
        ))}
        <Label x={130} y={803}>
          Year:High 0.0988 Low 0.0406
        </Label>
        <Label x={7} y={298}>
          ©ProRealTime.com <tspan className="italic">Data is end of day</tspan>
        </Label>
      </Plot>
      <Scale top={291} height={522} ticks={priceScale}>
        {[310, 335, 359, 382, 404, 425, 446, 465, 484, 502, 519, 536, 552, 568, 583, 598, 612, 626, 640, 654, 685, 709, 732, 754, 774, 795].map((y) => (
          <rect key={y} x={1381} y={y} width={2} height={1} fill="#738c98" />
        ))}
        <ValueBox y={429} color="#000" fill="#ffcc10">
          0.0500
        </ValueBox>
      </Scale>
    </section>
  );
}

function VolumeChart() {
  return (
    <section className="relative flex">
      <PanelHeader title="Volume" />
      <Plot top={203} height={85} className="bg-[#e2eaff]">
        <Grid top={203} bottom={288} rows={[238, 274]} />
        <g shapeRendering="crispEdges">
          {volumes.map((v, i) => (
            <rect
              key={i}
              x={Math.round(7 + (i * 1245) / (volumes.length - 1))}
              y={203}
              width={2}
              height={v.size}
              fill={v.up ? "#dc6464" : "#50d050"}
            />
          ))}
        </g>
        <polyline points={volumeAverage} fill="none" stroke="#0000c8" strokeWidth={2} />
      </Plot>
      <Scale
        top={202}
        height={87}
        ticks={[
          [238, "500M"],
          [274, "1,000M"],
        ]}
      >
        <ValueBox y={205} color="#50d050" fill="#d2def5">
          161M
        </ValueBox>
        <ValueBox y={219} color="#0000c8" fill="#d2def5">
          308M
        </ValueBox>
      </Scale>
    </section>
  );
}

function RsiChart() {
  const points = rsi.join(" ");
  return (
    <section className="relative flex">
      <PanelHeader title="Relative strength index (RSI) (14)" />
      <Plot top={124} height={75} className="bg-[#dfe7ff]">
        <Grid top={124} bottom={199} rows={[126, 160, 195]} />
        <clipPath id="overbought">
          <rect x={5} y={124} width={1375} height={23} />
        </clipPath>
        <polygon points={`5,160 ${points} 1254,160`} fill="#80b890" clipPath="url(#overbought)" />
        <path d="M5 147.500H1380M5 174.500H1380" stroke="#2828dc" />
        {rsi.slice(1).map((p, i) => (
          <path
            key={p[0]}
            d={`M${rsi[i]}L${p}`}
            stroke={p[1] < rsi[i][1] ? "#d01414" : "#147814"}
            strokeWidth={1.25}
            strokeLinecap="round"
          />
        ))}
      </Plot>
      <Scale
        top={123}
        height={77}
        ticks={[
          [129, "0", true],
          [193, "100", true],
        ]}
      >
        <ValueBox y={152} color="#007800" fill="#d2def5">
          47.333
        </ValueBox>
      </Scale>
    </section>
  );
}

function StochasticChart() {
  return (
    <section className="relative flex">
      <PanelHeader title="Stochastic (14 3 5)" />
      <Plot top={56} height={64} className="bg-[#dce5ff]">
        <linearGradient id="over" gradientUnits="userSpaceOnUse" x1="0" y1="60" x2="0" y2="114">
          <stop stopColor="#dc8890" />
          <stop offset="1" stopColor="#dccfe6" />
        </linearGradient>
        <linearGradient id="under" gradientUnits="userSpaceOnUse" x1="0" y1="60" x2="0" y2="114">
          <stop stopColor="#b4c2f4" />
          <stop offset="1" stopColor="#4448b0" />
        </linearGradient>
        <Grid top={56} bottom={120} rows={[58, 87, 116]} />
        <g shapeRendering="crispEdges">
          {stochK.slice(1).map((k, i) => (
            <polygon
              key={k[0]}
              points={[stochK[i], k, stochD[i + 1], stochD[i]].join(" ")}
              fill={k[1] > stochD[i + 1][1] ? "url(#under)" : "url(#over)"}
            />
          ))}
        </g>
        <path d="M5 70.500H1380M5 104.500H1380" stroke="#2828dc" />
        <polyline points={stochD.join(" ")} fill="none" stroke="#e06464" strokeDasharray="4 3" />
        <polyline points={stochastic.join(" ")} fill="none" stroke="#000" />
      </Plot>
      <Scale
        top={55}
        height={66}
        ticks={[
          [61, "0", true],
          [114, "100", true],
        ]}
      >
        <ValueBox y={69} color="#000" fill="#d2def5">
          41.987
        </ValueBox>
        <ValueBox y={83} color="#e05050" fill="#d2def5">
          45.283
        </ValueBox>
      </Scale>
    </section>
  );
}

function TimeAxis() {
  return (
    <svg viewBox="4 35 1432 20" preserveAspectRatio="none" className="block h-5 w-full -scale-y-100">
      {months.map(([x, label, bold]) => (
        <g key={x}>
          <rect x={x} y={51} width={1} height={4} fill="#738c98" />
          <Label x={x} y={43} bold={bold} anchor="middle">
            {label}
          </Label>
        </g>
      ))}
    </svg>
  );
}

function ZoomIcon({ sign }: { sign: ReactNode }) {
  return (
    <svg viewBox="0 0 20 20" className="size-5 -scale-y-100" fill="none">
      <path d="M10 9 17 2" stroke="#000" strokeWidth="3" />
      <circle cx="7.500" cy="12" r="5" fill="#fff" stroke="#333" />
      {sign}
    </svg>
  );
}

function ScrollBar() {
  const arrow = "flex h-4 w-[15px] items-center justify-center rounded-[3px] border border-[#738c98] bg-[#b4d3df]";
  return (
    <footer className="flex h-[34px] items-center border-t border-[#738c98] bg-linear-to-t from-[#9bbac7] to-[#afd1de] pr-1 pl-[5px]">
      <button aria-label="Export chart">
        <svg viewBox="0 0 20 20" className="size-5 -scale-y-100" fill="none">
          <path d="M1.500 3.500H16.500V16.500H1.500Z" fill="#fff" stroke="#25c" strokeWidth="2" />
          <path d="M3 12 6 6 9 10 12 5" stroke="#d22" />
          <path d="M4 6Q8 14 13 11V8L19 14 13 19V16Q6 17 4 6Z" fill="#4d4" stroke="#171" />
          <path d="M11 4 15 1 19 4Z" fill="#000" />
        </svg>
      </button>
      <button aria-label="Link charts" className="ml-1.5 flex">
        <svg viewBox="0 0 24 20" className="h-5 w-6 -scale-y-100" fill="none">
          <path d="M5 5V15" stroke="#000" strokeWidth="3" />
          <ellipse cx="5" cy="5" rx="3" ry="3.500" stroke="#000" strokeWidth="3" />
          <ellipse cx="5" cy="14.500" rx="3" ry="3.500" stroke="#000" strokeWidth="3" />
          <ellipse cx="5" cy="5" rx="3" ry="3.500" stroke="#fff" />
          <ellipse cx="5" cy="14.500" rx="3" ry="3.500" stroke="#fff" />
          <path d="M5 5V15" stroke="#fff" />
          <path d="M14 4V16M20.500 4V20" stroke="#333" />
          <rect x="12.500" y="7.500" width="4" height="6" fill="#e05555" stroke="#922" />
          <rect x="18.500" y="6.500" width="4" height="10" fill="#3c3" stroke="#171" />
          <path d="M14 4 17.500 1 21 4Z" fill="#000" />
        </svg>
      </button>
      <button aria-label="Scroll left" className={`ml-[2px] ${arrow}`}>
        <svg viewBox="0 0 4 8" className="h-2 w-1">
          <path d="M4 0V8L0 4Z" />
        </svg>
      </button>
      <div className="flex h-4 flex-1 border-y border-[#738c98] bg-[#a5c6d3] pr-4">
        <button
          aria-label="Scroll position"
          className="-my-px ml-auto flex h-4 w-[186px] items-center justify-center rounded-[3px] border border-[#738c98] bg-[#b4d5e1] shadow-[inset_0_0_0_1px_#c8e6f0]"
        >
          <svg viewBox="0 0 7 6" className="h-1.5 w-[7px]">
            <path d="M0 .500H7M0 3H7M0 5.500H7" stroke="#738c98" />
          </svg>
        </button>
      </div>
      <button aria-label="Scroll right" className={arrow}>
        <svg viewBox="0 0 4 8" className="h-2 w-1">
          <path d="M0 0V8L4 4Z" />
        </svg>
      </button>
      <div className="ml-1 flex gap-2">
        <button aria-label="Chart settings">
          <svg viewBox="0 0 20 20" className="size-5 -scale-y-100" fill="none">
            <path d="M5 1V13M14.500 1V18" stroke="#222" />
            <rect x="2.500" y="3.500" width="5" height="6" fill="#d44" stroke="#511" />
            <rect x="11.500" y="2.500" width="5" height="14" fill="#4b5" stroke="#242" />
            <path d="M2.500 3.500 5 3.500 8 7 12 7 12 9 10.500 10 13.500 14 12 16 8.500 12 6.500 12 6.500 8Z" fill="#fff" stroke="#222" />
          </svg>
        </button>
        <button aria-label="Fit chart">
          <svg viewBox="0 0 20 20" className="size-5 -scale-y-100" fill="none">
            <path d="M11 8 18 2" stroke="#000" strokeWidth="3" />
            <circle cx="7.500" cy="12.500" r="5" fill="url(#lens)" stroke="#333" />
            <path d="M1 3.500H10M3 1 1 3.500 3 6M8 1 10.500 3.500 8 6M17.500 8V17M15 10 17.500 7.500 20 10M15 15 17.500 17.500 20 15" stroke="#00f" strokeWidth="1.500" />
          </svg>
        </button>
        <button aria-label="Zoom out">
          <ZoomIcon sign={<path d="M5 12H10" stroke="#00f" strokeWidth="1.500" />} />
        </button>
        <button aria-label="Zoom in">
          <ZoomIcon sign={<path d="M4.500 12H10.500M7.500 9V15" stroke="#00f" strokeWidth="1.500" />} />
        </button>
      </div>
    </footer>
  );
}

export default function App() {
  return (
    <div
      className="min-h-screen -scale-y-100 border border-[#738c98] bg-[#9bbac7] text-[11px] text-black"
      style={{ fontFamily: FONT }}
    >
      <svg className="absolute size-0" aria-hidden="true">
        <radialGradient id="lens" cx="0.35" cy="0.65">
          <stop stopColor="#fff" />
          <stop offset="1" stopColor="#777" />
        </radialGradient>
      </svg>
      <div className="border-l border-[#cbe9f4] pr-[3px] pl-[2px]">
        <TitleBar />
        <Toolbar />
        <main className="flex flex-col gap-0.5 bg-white">
          <PriceChart />
          <VolumeChart />
          <RsiChart />
          <StochasticChart />
        </main>
        <div className="bg-white">
          <TimeAxis />
        </div>
        <ScrollBar />
      </div>
    </div>
  );
}
